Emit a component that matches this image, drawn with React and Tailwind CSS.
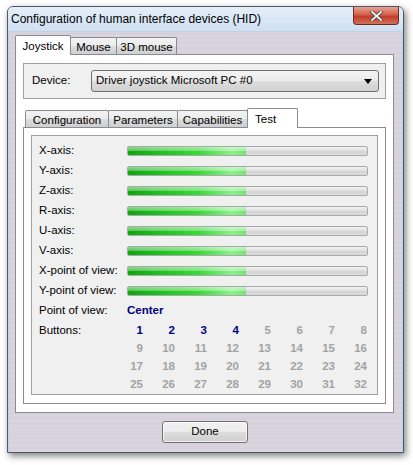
import React from "react";

const FONT = { fontFamily: '"Liberation Sans", Arial, sans-serif' };

function Bar() {
  return (
    <div className="relative h-[10px] w-[241px] rounded-[2px] border border-[#a9a9a9] bg-[linear-gradient(to_bottom,#f3f3f3_0%,#e2e2e2_40%,#d4d4d4_60%,#dcdcdc_100%)] overflow-hidden">
      <div className="absolute left-0 top-0 h-full w-[118px] bg-[linear-gradient(to_right,#0fa50f_0%,#22c322_30%,#3ad83a_60%,#8ef08e_88%,#74e274_100%)]">
        <div className="absolute left-0 top-0 h-[45%] w-full bg-[linear-gradient(to_bottom,rgba(255,255,255,0.55),rgba(255,255,255,0.3))]" />
      </div>
    </div>
  );
}

function Row({ label, children, h = "h-[20px]" }) {
  return (
    <div className={`flex items-center ${h}`}>
      <div className="w-[88px] shrink-0 text-[11.5px] text-black">{label}</div>
      {children}
    </div>
  );
}

function TabSel({ label, w, left = false }) {
  return (
    <div
      className={`relative z-10 -mb-px h-[20px] ${w} shrink-0 border border-b-0 border-[#898c95] bg-white rounded-t-[2px] text-[11.5px] text-black pt-[2px] ${left ? "text-left pl-[7px]" : "text-center"}`}
    >
      {label}
    </div>
  );
}

function Tab({ label, w }) {
  return (
    <div
      className={`h-[17px] ${w} shrink-0 -ml-px first:ml-0 border border-b-0 border-[#898c95] bg-[linear-gradient(to_bottom,#f3f3f3,#ebebeb_50%,#dcdcdc_51%,#cfcfcf)] rounded-t-[2px] text-[11.5px] text-black text-center pt-[1px]`}
    >
      {label}
    </div>
  );
}

const axes = [
  "X-axis:",
  "Y-axis:",
  "Z-axis:",
  "R-axis:",
  "U-axis:",
  "V-axis:",
  "X-point of view:",
  "Y-point of view:",
];

export default function App() {
  const nums = Array.from({ length: 32 }, (_, i) => i + 1);
  return (
    <div className="w-[413px] h-[465px] bg-white overflow-hidden" style={FONT}>
      <div className="ml-[7px] mt-[6px] w-[397px] h-[447px] flex flex-col border border-[#4d5866] rounded-t-[6px] shadow-[2px_3px_7px_rgba(0,0,0,0.5)] bg-[repeating-linear-gradient(to_bottom,#d9d4de_0px,#d3ced9_2px,#dcd7e1_3px,#d6d1dc_5px)]">
        {/* Title bar */}
        <div className="h-[25px] shrink-0 flex items-start bg-[linear-gradient(to_bottom,#e4eef9,#cfe0f2)] border-b border-[#c3d2e2] rounded-t-[5px] pl-[3px]">
          <div className="pt-[5px] text-[12px] text-black leading-[15px]">
            Configuration of human interface devices (HID)
          </div>
          <div className="ml-auto mr-[4px] w-[46px] h-[18px] rounded-b-[4px] border border-t-0 border-[#6b2a22] bg-[linear-gradient(to_bottom,#e8a294,#d3604a_45%,#c23d27_55%,#d2705a)] flex items-center justify-center">
            <svg width="13" height="10" viewBox="0 0 13 10">
              <path
                d="M2 1 L11 9 M11 1 L2 9"
                stroke="#4a4a4a"
                strokeWidth="3.6"
                strokeLinecap="square"
              />
              <path
                d="M2 1 L11 9 M11 1 L2 9"
                stroke="#f4f4f4"
                strokeWidth="1.8"
                strokeLinecap="square"
              />
            </svg>
          </div>
        </div>

        {/* Body */}
        <div className="flex-1 flex flex-col pl-[6px] pr-[8px] pt-[3px] border-l border-r border-[#b9d5ee]">
          {/* Top tabs */}
          <div className="flex items-end">
            <TabSel label="Joystick" w="w-[56px]" />
            <Tab label="Mouse" w="w-[47px]" />
            <Tab label="3D mouse" w="w-[61px]" />
          </div>
          {/* Tab page */}
          <div className="h-[359px] border border-[#898c95] bg-white px-[7px] pt-[8px]">
            {/* Device group */}
            <div className="h-[36px] border border-[#a0a0a0] bg-[#f0f0f0] flex items-center pl-[8px] pr-[6px]">
              <div className="w-[59px] text-[11.5px] text-black">Device:</div>
              <div className="flex-1 h-[22px] rounded-[3px] border border-[#707070] bg-[linear-gradient(to_bottom,#f4f4f4,#ebebeb_50%,#dddddd_51%,#d0d0d0)] flex items-center pl-[4px] pr-[6px] text-[11.5px] text-black">
                <span>Driver joystick Microsoft PC #0</span>
                <svg className="ml-auto" width="8" height="5" viewBox="0 0 8 5">
                  <path d="M0 0 H8 L4 5 Z" fill="#000" />
                </svg>
              </div>
            </div>

            {/* Inner tabs */}
            <div className="mt-[9px] flex items-end pl-[2px]">
              <Tab label="Configuration" w="w-[84px]" />
              <Tab label="Parameters" w="w-[70px]" />
              <Tab label="Capabilities" w="w-[71px]" />
              <TabSel label="Test" w="w-[51px] -ml-px" left />
            </div>
            <div className="h-[277px] border border-[#898c95] bg-white px-[7px] pt-[7px]">
              <div className="h-[260px] border border-[#a0a0a0] bg-[#f0f0f0] pl-[7px] pt-[5px]">
                {axes.map((a) => (
                  <Row key={a} label={a}>
                    <Bar />
                  </Row>
                ))}
                <Row label="Point of view:">
                  <span className="text-[11.5px] font-bold text-[#000080]">Center</span>
                </Row>
                <div className="flex">
                  <div className="w-[72px] shrink-0 text-[11.5px] text-black h-[18px] flex items-center mt-[1px]">
                    Buttons:
                  </div>
                  <div className="grid grid-cols-[repeat(8,32px)] mt-[1px]">
                    {nums.map((n) => (
                      <div
                        key={n}
                        className={`h-[18px] flex items-center justify-end text-[11.5px] font-bold ${n <= 4 ? "text-[#000080]" : "text-[#a3a3a3]"}`}
                      >
                        {n}
                      </div>
                    ))}
                  </div>
                </div>
              </div>
            </div>
          </div>

          {/* Bottom */}
          <div className="flex-1 flex items-start justify-center pt-[8px]">
            <div className="ml-[1px] w-[86px] h-[22px] rounded-[3px] border border-[#707070] bg-[linear-gradient(to_bottom,#f2f2f2,#ebebeb_50%,#dddddd_51%,#cfcfcf)] flex items-center justify-center text-[11.5px] text-black shadow-[inset_0_0_0_1px_rgba(255,255,255,0.7)]">
              Done
            </div>
          </div>
        </div>
      </div>
    </div>
  );
}
